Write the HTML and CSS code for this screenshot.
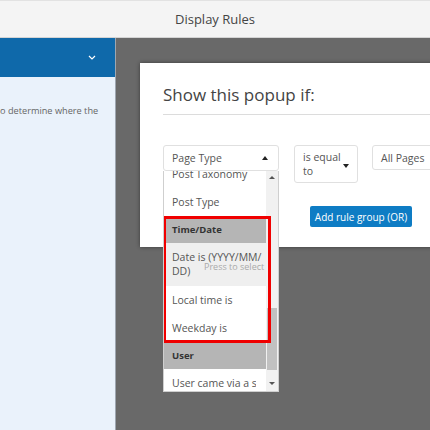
FILE: index.html
```html
<!DOCTYPE html>
<html lang="en">
<head>
<meta charset="utf-8">
<title>Display Rules</title>
<link rel="stylesheet" href="styles.css">
</head>
<body>
<div class="topbar">Display Rules</div>
<div class="main">
  <aside class="side">
    <div class="side-head">
      <svg class="chev" width="8" height="5" viewBox="0 0 8 5"><polyline points="1,1 4,4 7,1" fill="none" stroke="#fff" stroke-width="1.2"/></svg>
    </div>
    <p class="side-text">o determine where the</p>
  </aside>
  <section class="overlay">
    <div class="modal">
      <h2 class="modal-title">Show this popup if:</h2>
      <div class="rule-row">
        <div class="select-wrap">
          <div class="select sel-type">
            <span>Page Type</span>
            <span class="tri tri-up"></span>
          </div>
          <div class="dropdown">
            <div class="options">
              <div class="opt">Post Taxonomy</div>
              <div class="opt">Post Type</div>
              <div class="group">Time/Date</div>
              <div class="opt opt-hover opt-two">Date is (YYYY/MM/<br>DD)<span class="hint">Press to select</span></div>
              <div class="opt">Local time is</div>
              <div class="opt">Weekday is</div>
              <div class="group">User</div>
              <div class="opt"><span class="clip">User came via a search engine</span></div>
            </div>
            <div class="scrollbar">
              <span class="tri tri-up small sb-up"></span>
              <div class="thumb"></div>
              <span class="tri tri-down small sb-down"></span>
            </div>
            <div class="highlight"></div>
          </div>
        </div>
        <div class="select sel-op">
          <span>is equal<br>to</span>
          <span class="tri tri-down"></span>
        </div>
        <div class="select sel-val">
          <span>All Pages</span>
        </div>
      </div>
      <div class="btn-row">
        <button class="btn">Add rule group (OR)</button>
      </div>
    </div>
  </section>
</div>
</body>
</html>
```
FILE: styles.css
```css
html, body {
  margin: 0;
  padding: 0;
  width: 430px;
  height: 430px;
  overflow: hidden;
  font-family: "Open Sans", "Noto Sans", sans-serif;
  color: #555;
}
.topbar {
  height: 36px;
  border-top: 1px solid #e2e2e2;
  border-bottom: 1px solid #d4d4d4;
  background: #f4f4f4;
  display: flex;
  align-items: center;
  justify-content: center;
  font-size: 13px;
  color: #444;
}
.main {
  display: flex;
  height: 392px;
}
.side {
  width: 115px;
  flex: none;
  background: #eaf2fb;
  border-right: 1px solid #9ea6b0;
}
.side-head {
  height: 39px;
  background: #0f69aa;
  display: flex;
  align-items: center;
  justify-content: flex-end;
  padding-right: 19px;
}
.chev { display: block; }
.side-text {
  margin: 26px 0 0 0;
  font-size: 9.2px;
  line-height: 16px;
  color: #666;
  white-space: nowrap;
}
.overlay {
  flex: 1;
  background: #696969;
  padding: 25px 0 0 24px;
  overflow: hidden;
}
.modal {
  width: 420px;
  height: 184px;
  background: #fff;
  box-shadow: 0 0 4px rgba(0,0,0,0.45);
  padding-left: 23px;
  box-sizing: border-box;
}
.modal-title {
  margin: 0;
  padding: 20px 0 7px 0;
  font-size: 17px;
  line-height: 24px;
  font-weight: 400;
  color: #444;
  border-bottom: 1px solid #dcdcdc;
}
.rule-row {
  display: flex;
  align-items: flex-start;
  margin-top: 30px;
}
.select-wrap {
  position: relative;
  width: 116px;
  margin-right: 15px;
}
.select {
  box-sizing: border-box;
  border: 1px solid #e0e0e0;
  border-radius: 3px;
  background: #fff;
  font-size: 10.5px;
  color: #555;
  display: flex;
  align-items: center;
  justify-content: space-between;
  padding: 0 10px 0 8px;
}
.sel-type {
  height: 26px;
  width: 116px;
}
.sel-op {
  width: 64px;
  height: 38px;
  line-height: 14px;
  padding: 0 8px 0 8px;
  margin-right: 14px;
  align-items: center;
}
.sel-op .tri { margin-top: 3px; }
.sel-val {
  width: 80px;
  height: 25px;
}
.tri {
  width: 0;
  height: 0;
  border-left: 3.5px solid transparent;
  border-right: 3.5px solid transparent;
  display: block;
}
.tri-up { border-bottom: 4px solid #222; }
.tri-down { border-top: 4px solid #222; }
.tri.small {
  border-left-width: 3px;
  border-right-width: 3px;
}
.small.tri-up { border-bottom: 3px solid #555; }
.small.tri-down { border-top: 3px solid #555; }
.dropdown {
  position: absolute;
  top: 26px;
  left: 0;
  width: 116px;
  height: 221px;
  box-sizing: border-box;
  background: #fff;
  border: 1px solid #cfcfcf;
  border-top: none;
  overflow: hidden;
}
.options {
  margin-top: -11px;
  width: 103px;
}
.opt {
  height: 28px;
  box-sizing: border-box;
  padding: 0 0 0 8px;
  display: flex;
  align-items: center;
  font-size: 10.5px;
  color: #555;
  white-space: nowrap;
  position: relative;
}
.opt-two {
  height: 43px;
  line-height: 13.5px;
  display: block;
  padding-top: 8px;
}
.opt-hover { background: #efefef; }
.hint {
  position: absolute;
  left: 40px;
  top: 17px;
  font-size: 9px;
  color: #aaa;
}
.clip {
  display: block;
  width: 84px;
  overflow: hidden;
}
.group {
  height: 27px;
  box-sizing: border-box;
  background: #b5b5b5;
  padding-left: 8px;
  display: flex;
  align-items: center;
  font-size: 9.5px;
  font-weight: 700;
  color: #333;
}
.scrollbar {
  position: absolute;
  top: 0;
  right: 0;
  width: 12px;
  height: 100%;
  background: #f1f1f1;
}
.sb-up {
  position: absolute;
  top: 5px;
  left: 3px;
}
.sb-down {
  position: absolute;
  bottom: 6px;
  left: 3px;
}
.thumb {
  position: absolute;
  top: 137px;
  left: 1px;
  width: 10px;
  height: 62px;
  background: #c1c1c1;
}
.highlight {
  position: absolute;
  left: -1px;
  top: 45px;
  width: 108px;
  height: 127px;
  box-sizing: border-box;
  border: 3px solid #f00000;
  pointer-events: none;
}
.btn-row {
  display: flex;
  margin-top: 23px;
  padding-left: 147px;
}
.btn {
  height: 21px;
  width: 102px;
  padding: 0;
  border: none;
  border-radius: 2px;
  background: #0e7cc4;
  color: #fff;
  font-family: "Open Sans", "Noto Sans", sans-serif;
  font-size: 10px;
}
```
